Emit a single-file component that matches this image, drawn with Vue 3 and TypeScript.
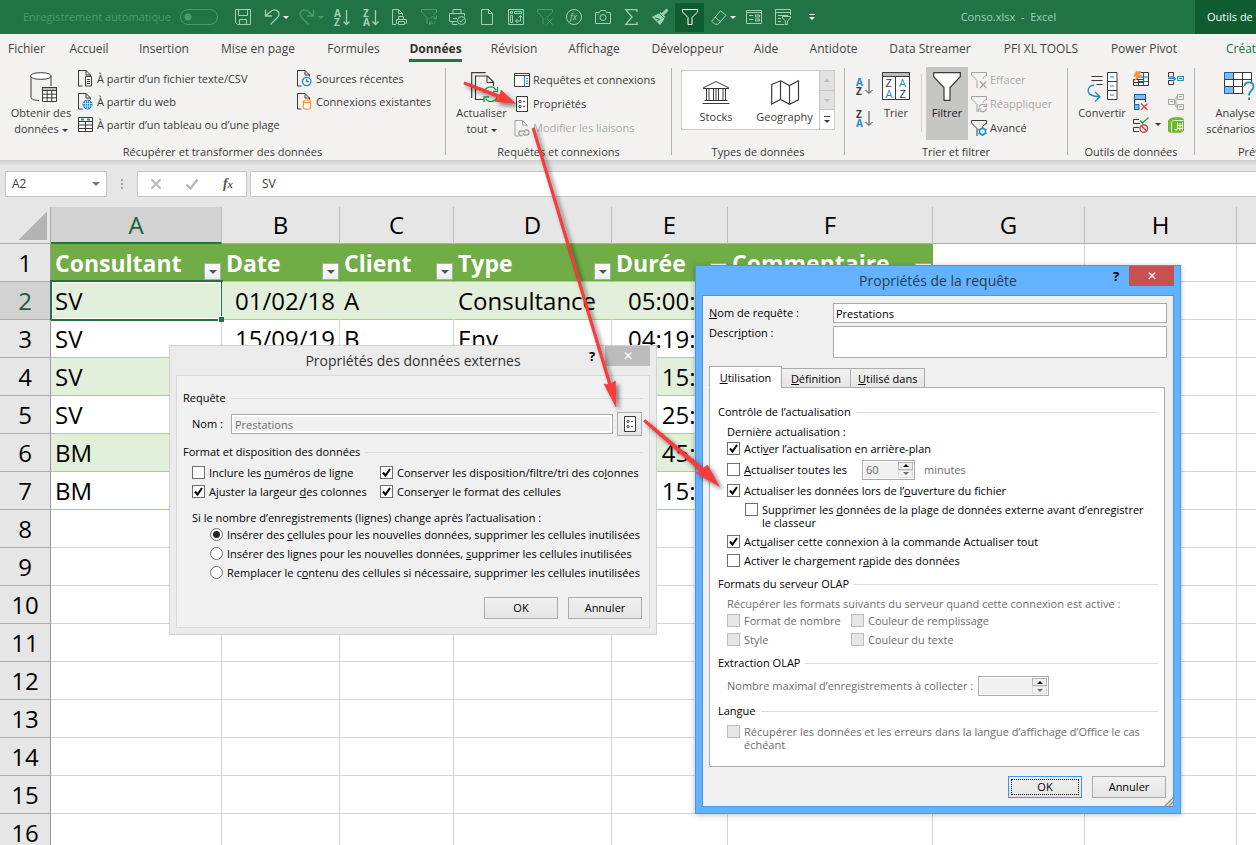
<script setup lang="ts">
import { h, ref } from 'vue'

interface Stroke { d: string; s?: string; f?: string; w?: number }
interface Letter { t: string; x: number; y: number; c?: string; size?: number; bold?: boolean; italic?: boolean }
interface IconDef { w: number; h: number; parts: (Stroke | Letter)[] }

const blue = '#1e8bcd'
const navy = '#0f64b4'
const orange = '#f79432'
const ink = '#3b3a39'
const red = '#e8414a'
const green = '#21a24f'
const gray = '#a3a3a3'

const docOutline = 'M4.5 16H.5V.5h7.500l4.500 4.500v1.500M8 .5V5h4.500'
const funnel = 'M.5.5h15v2.500L10 8.500v7H6v-7L.5 3z'
const brokenFunnel = 'M15.500 4V.5H.5V3L6 8.500V16M15.500 3l-4 3.500'

const icons: Record<string, IconDef> = {
  save: { w: 16, h: 16, parts: [{ d: 'M.5.5h15v15h-13l-2-2zM3.500.5v6h9v-6M4.500 15.500v-5h7v5' }] },
  undo: { w: 16, h: 16, parts: [{ d: 'M1.500.5v6.500h6.500M1.500 7L7 2.200C9.500.2 12.500.5 14 2.500c1.600 2.200 1 4.500-1 6.500L6.500 15.500', w: 1.3 }] },
  redo: { w: 16, h: 16, parts: [{ d: 'M14.500.5v6.500H8M14.500 7L9 2.200C6.500.2 3.500.5 2 2.500.4 4.700 1 7 3 9l6.500 6.500', w: 1.3 }] },
  sortAz: { w: 16, h: 17, parts: [{ t: 'A', x: 0, y: 8, size: 10, bold: true }, { t: 'Z', x: 0, y: 17, size: 10, bold: true }, { d: 'M12.500 1v14.500M9.500 12.500l3 3 3-3', w: 1.3 }] },
  sortZa: { w: 16, h: 17, parts: [{ t: 'Z', x: 0, y: 8, size: 10, bold: true }, { t: 'A', x: 0, y: 17, size: 10, bold: true }, { d: 'M12.500 1v14.500M9.500 12.500l3 3 3-3', w: 1.3 }] },
  docPrint: { w: 16, h: 16, parts: [{ d: 'M4 15.500H.5V.5h6l4 4v2M6.500.5v4h4M6.500 10.500v-3h5v3M5.500 14.500h-1v-4h10v4h-1M6.500 12.500h6v3h-6z' }] },
  filterSync: { w: 16, h: 16, parts: [{ d: 'M15.500 4V.5H.5V3L6 8.500V15M15.500 3l-3 3M8.500 10a4 4 0 0 1 6.500-1M15.500 6.500v3h-3M15 12.500a4 4 0 0 1-6 1.500M8.500 16v-3h3' }] },
  printCheck: { w: 17, h: 16, parts: [{ d: 'M4 4.500v-4h8v4M8 12.500H.5v-8h15v3M4 9.500h4M3.500 12.500v3h5' }, { d: 'M8.500 11.500a4 4 0 1 0 8 0a4 4 0 1 0-8 0M10.500 11.500l1.500 1.500 2.500-3' }] },
  page: { w: 12, h: 16, parts: [{ d: 'M.5.5h7l4 4v11H.5zM7.500.5v4h4' }] },
  pivot: { w: 16, h: 16, parts: [{ d: 'M.5.5h15v15H.5z' }, { d: 'M2.500 2.500h2v2h-2zM6.500 2.500h7v2h-7zM2.500 6.500h2v7h-2zM12.500 6.500v5.500H7.500M10.500 8.500l2-2 2 2M9.500 10l-2 2 2 2' }] },
  filterX: { w: 16, h: 16, parts: [{ d: 'M15.500 3V.5H.5V3L6 8.500V15M15.500 3L10 8.500M9.500 9.500l6 6M15.500 9.500l-6 6' }] },
  fxRound: { w: 16, h: 16, parts: [{ d: 'M.5 8a7.500 7.500 0 1 0 15 0a7.500 7.500 0 1 0-15 0' }, { t: 'fx', x: 4, y: 11, size: 9, italic: true }] },
  camera: { w: 16, h: 14, parts: [{ d: 'M.5 2.500h4l1-2h5l1 2h4v11H.5zM5 7.500a3 3 0 1 0 6 0a3 3 0 1 0-6 0M2.500 4.500h1' }] },
  sigma: { w: 13, h: 16, parts: [{ d: 'M12 3V.7H.8L7 8 .8 15.300H12V13', w: 1.3 }] },
  brush: { w: 17, h: 16, parts: [{ d: 'M15.500.5l-5 5', w: 3 }, { d: 'M8 3.500l5 5', w: 1.5 }, { d: 'M7 5l5 5-4 5.500L.5 8z', f: 'currentColor' }, { d: 'M3 9l4 1M5 12l3-2', s: '#217346' }] },
  filter: { w: 16, h: 16, parts: [{ d: funnel }] },
  eraser: { w: 16, h: 15, parts: [{ d: 'M9.500.8l5.500 4.500-8 9H4l-3.300-3zM4 7l5.500 4.800' }] },
  form: { w: 16, h: 14, parts: [{ d: 'M.5.5h15v13H.5zM.5 2.500h15M3 5.500h4M3 9.500h4M9.500 5h4v2h-4zM9.500 9h4v2h-4z' }] },
  formFilter: { w: 16, h: 16, parts: [{ d: 'M15.500 6V.5H.5v15h9M.5 3.500h15M3 6.500h10M3 9.500h3M3 12.500h3M7.500 7.500h8v1.500l-3 3v3.500h-2V12l-3-3z' }] },

  database: { w: 28, h: 31, parts: [
    { d: 'M1 4v21.500c0 1.800 4 3 8 3', s: ink }, { d: 'M.8 4c0-2 4-3.300 10-3.300S21 2 21 4s-4 3.300-10.200 3.300S.8 6 .8 4z', s: ink, f: '#fff' }, { d: 'M21 4v10', s: ink },
    { d: 'M12.500 15.500h14v14h-14z', s: ink, f: '#fff' }, { d: 'M12.500 15.500h14v3h-14z', s: ink, f: '#bbb' }, { d: 'M12.500 22.200h14M12.500 25.800h14M17.200 18.500v11M21.800 18.500v11', s: ink }] },
  docText: { w: 15, h: 17, parts: [{ d: docOutline, s: ink, f: 'none' }, { d: 'M7.500 6.500h6v9.500h-6z', s: ink, f: '#fff' }, { d: 'M9 9.500h3M9 11.500h3M9 13.500h3', s: ink }] },
  docWeb: { w: 15, h: 17, parts: [{ d: docOutline, s: ink, f: 'none' }, { d: 'M5 11.500a4.500 4.500 0 1 0 9 0a4.500 4.500 0 1 0-9 0', s: blue, f: blue }, { d: 'M5 10.500h9M5 13h9M9.500 7v9M7.500 8v7M11.500 8v7', s: '#d9effb', w: 0.7 }] },
  tableIcon: { w: 15, h: 15, parts: [{ d: 'M.5.5h14v14H.5z', s: ink, f: '#fff' }, { d: 'M.5 4.500h14M.5 8h14M.5 11.500h14M7.500 4.500v10', s: ink }, { d: 'M3 2.500h3M9 2.500h3', s: blue, w: 2 }] },
  docClock: { w: 15, h: 17, parts: [{ d: docOutline, s: ink, f: 'none' }, { d: 'M5.500 11.500a4.200 4.200 0 1 0 8.400 0a4.200 4.200 0 1 0-8.400 0', s: blue, f: '#fff', w: 1.3 }, { d: 'M9.700 9v2.700H12', s: ink }] },
  docDb: { w: 15, h: 17, parts: [{ d: docOutline, s: ink, f: 'none' }, { d: 'M6.500 8.500c0-2 7-2 7 0v6.500c0 1.500-7 1.500-7 0zM6.500 8.500c0 1.600 7 1.600 7 0', s: orange, f: '#fff', w: 1.2 }] },
  refreshAll: { w: 28, h: 30, parts: [
    { d: 'M.7 26V.7h14', s: ink, w: 1.2 }, { d: 'M13 27.500H4.500V4h12l6 6v4', s: ink, f: 'none', w: 1.2 }, { d: 'M16 4v6.500h6.500', s: ink },
    { d: 'M13 21a6.500 6.500 0 0 1 12-3M26.500 15v4.500H22M26.500 23a6.500 6.500 0 0 1-12 3.500M13 30v-5h5', s: green, w: 1.4 }] },
  panes: { w: 16, h: 14, parts: [{ d: 'M.5.5h15v13H.5z', s: ink, f: '#fff' }, { d: 'M.5 2.500h15', s: ink }, { d: 'M10.500 3v10', s: blue }, { d: 'M12 5.500h2M12 8h2M12 10.500h2', s: blue }] },
  props: { w: 12, h: 16, parts: [{ d: 'M.5.5h11v15H.5z', s: ink, f: '#fff' }, { d: 'M3 4.500h2v2H3zM3 9.500h2v2H3zM7 5.500h2M7 10.500h2', s: '#555' }] },
  links: { w: 15, h: 17, parts: [{ d: docOutline, s: gray, f: 'none' }, { d: 'M8 15.500H6.500a2 2 0 0 1 0-4.500h2.500a2 2 0 0 1 1.500 2.500M10 10h2a2 2 0 0 1 0 5h-2a2 2 0 0 1-1.500-2', s: gray, w: 1.3 }] },
  bank: { w: 28, h: 25, parts: [{ d: 'M1 8L14 1.500 27 8M1 8.500h26M2.500 20.500h23M.5 23.500h27M4.500 8.500v12M7 8.500v12M11.500 8.500v12M14 8.500v12M16.500 8.500v12M21 8.500v12M23.500 8.500v12', s: ink }] },
  map: { w: 28, h: 25, parts: [{ d: 'M.7 4.500L9.500.8l9 4.700 9-4.700v19l-9 4.500-9-4.800L.7 24zM9.500.8v18.700M18.500 5.500v18.800', s: ink, f: 'none', w: 1.2 }] },
  azBlue: { w: 17, h: 17, parts: [{ t: 'A', x: 0, y: 8, c: blue, size: 10, bold: true }, { t: 'Z', x: 0, y: 17, c: ink, size: 10, bold: true }, { d: 'M13 1v14M9.500 12l3.500 3.500 3.500-3.500', s: ink }] },
  zaBlue: { w: 17, h: 17, parts: [{ t: 'Z', x: 0, y: 8, c: ink, size: 10, bold: true }, { t: 'A', x: 0, y: 17, c: blue, size: 10, bold: true }, { d: 'M13 1v14M9.500 12l3.500 3.500 3.500-3.500', s: ink }] },
  sortBig: { w: 28, h: 28, parts: [{ d: 'M.5.5h27v27H.5z', s: ink, f: '#fff' }, { d: 'M.5.5h27v4H.5z', s: ink, f: '#bbb' }, { d: 'M13.500 4.500v23', s: ink },
    { t: 'Z', x: 3.500, y: 15, c: ink, size: 11 }, { t: 'A', x: 17, y: 15, c: blue, size: 11 }, { t: 'A', x: 3.500, y: 25.500, c: blue, size: 11 }, { t: 'Z', x: 17.500, y: 25.500, c: ink, size: 11 }] },
  filterBig: { w: 28, h: 29, parts: [{ d: 'M.7.7h26.600v4L17 15.500v12.800h-6V15.500L.7 4.700z', s: ink, f: '#fff', w: 1.2 }] },
  clearFilter: { w: 16, h: 16, parts: [{ d: brokenFunnel, s: gray }, { d: 'M9 9.500l6.500 6.500M15.500 9.500L9 16', s: gray, w: 1.3 }] },
  reapply: { w: 16, h: 16, parts: [{ d: brokenFunnel, s: gray }, { d: 'M8 11.500a3.800 3.800 0 0 1 6.500-2M15.500 7.500v3h-3M15.500 12.500a3.800 3.800 0 0 1-6.500 2M7.500 16v-3h3', s: gray, w: 1.2 }] },
  advanced: { w: 16, h: 16, parts: [{ d: brokenFunnel, s: ink, f: 'none' }, { d: 'M11.500 7v9M7.500 9.300l8 4.500M15.500 9.300l-8 4.500', s: blue, w: 1.8 }, { d: 'M8.500 11.500a3 3 0 1 0 6 0a3 3 0 1 0-6 0', s: blue, f: '#fff', w: 1.4 }] },
  convert: { w: 31, h: 30, parts: [{ d: 'M4.500 4.500h11M4.500 8.500h11M9.500 12.500h6', s: ink, w: 1.2 }, { d: 'M7 13c-4.500.5-6.500 3.500-5.800 6.500.7 3 3.500 5 11.500 5M8 20l5 4.800-5 4.700', s: blue, w: 1.3 }, { d: 'M20.500.5h9.500v27h-9.500zM20.500 9.500H30M20.500 18.500H30', s: ink, f: '#fff' }, { d: 'M23 5h4M23 14h4M23 23h4', s: blue, w: 1.2 }] },
  flashFill: { w: 16, h: 16, parts: [{ d: 'M4.500 1.500h11v13h-11z', s: ink, f: '#fff' }, { d: 'M.5 8.500h10v6H.5zM.5 11.500h10M5.500 8.500v6', s: ink, f: '#fff' }, { d: 'M10.500 1.500v13M5 6h10.500M5 10.500h10.500', s: navy, w: 1.2 }, { d: 'M3 .5h5L6 4h3L1.500 10 3.500 5.500h-3z', s: orange, f: orange, w: 0.5 }] },
  dedupe: { w: 16, h: 16, parts: [{ d: 'M1.500.5h11v5h-11z', s: navy, f: '#83b9e8' }, { d: 'M1.500 5.500h11V8M1.500 5.500v10', s: ink }, { d: 'M1.500 10.500H6v5H1.500z', s: navy, f: '#83b9e8' }, { d: 'M8 9.500l6.500 6.500M14.500 9.500L8 16', s: red, w: 1.4 }] },
  validate: { w: 16, h: 16, parts: [{ d: 'M6 2.500H.5v4H7M6 10.500H.5v4H6', s: ink, f: 'none' }, { d: 'M7 3.500l2.500 2.500L15.500.5', s: green, w: 1.3 }, { d: 'M7 11.500a3.800 3.800 0 1 0 7.600 0a3.800 3.800 0 1 0-7.600 0M8.500 9l5 5', s: red, w: 1.4 }] },
  consolidate: { w: 16, h: 14, parts: [{ d: 'M5.500 4.500V.5h-5v4.500h5M5.500 9.500v3h-5v-4h5', s: ink, f: 'none' }, { d: 'M0 6.500h7.500M5 4.500l2.500 2.200L5 9', s: blue, w: 1.2 }, { d: 'M9.500 4.500h6v4h-6zM11 6.500h3', s: blue }] },
  relations: { w: 16, h: 16, parts: [{ d: 'M.5 5.500h6v5h-6zM9.500.5h6v5h-6zM9.500 10.500h6v5h-6zM6.500 8h1.500V3h1.500M8 8v5h1.500M2 7.500h3M11 2.500h3M11 12.500h3', s: gray }] },
  dataModel: { w: 16, h: 16, parts: [{ d: 'M0 3.500C2 1 4 .2 6 .2h6c2 0 3.500 1 4 2.500v11l-3 2H4c-2 0-3-.5-4-1.500z', s: 'none', f: '#6fb92c' }, { d: 'M3.500 15V5.500C4 3.800 5 3.500 6.500 3.500h9', s: '#e4f3d3' }, { d: 'M9.500 5.500v6.500c0 1.500-2.500 1.500-3 0M12 6v7.500M14.500 5.500v8M9.500 8.500h5M10 11.500h4.500', s: '#fff' }] },
  whatIf: { w: 31, h: 29, parts: [{ d: 'M.5.500h27v21H.5z', s: ink, f: '#fff' }, { d: 'M.5.500h9v7H.5zM.5 14.500h9v7H.5z', s: navy, f: '#83b9e8' }, { d: 'M.5 7.500h27M.5 14.500h27M9.500.5v21M18.500.5v21', s: ink }, { d: 'M19.500 10.500h11.500v18h-11.500z', s: 'none', f: '#f3f2f1' }, { d: 'M20.500 14c.4-5 9-5 9 .5 0 4-4.500 4-4.500 9M25 25.500v2.500', s: blue, w: 1.7 }] },
  cross: { w: 12, h: 12, parts: [{ d: 'M1.500 1.500l9 9M10.500 1.500l-9 9', s: '#b9b9b9', w: 2 }] },
  tick: { w: 14, h: 12, parts: [{ d: 'M1.500 6.500l4 4L12.500 1.500', s: '#b9b9b9', w: 2.4 }] }
}

const Icon = (props: { name: string }) => {
  const def = icons[props.name]
  return h(
    'svg',
    { width: def.w, height: def.h, viewBox: `0 0 ${def.w} ${def.h}`, class: 'icon', 'aria-hidden': 'true' },
    def.parts.map(p =>
      't' in p
        ? h('text', {
            x: p.x, y: p.y, fill: p.c ?? 'currentColor', 'font-size': p.size ?? 9,
            'font-weight': p.bold ? 700 : 400, 'font-style': p.italic ? 'italic' : 'normal'
          }, p.t)
        : h('path', { d: p.d, stroke: p.s ?? 'currentColor', fill: p.f ?? 'none', 'stroke-width': p.w ?? 1 })
    )
  )
}
Icon.props = ['name']

const quickTools = [
  { icon: 'save', label: 'Enregistrer' },
  { icon: 'undo', label: 'Annuler la frappe', menu: true },
  { icon: 'redo', label: 'Rétablir', menu: true, off: true },
  { icon: 'sortAz', label: 'Trier de A à Z' },
  { icon: 'sortZa', label: 'Trier de Z à A' },
  { icon: 'docPrint', label: 'Aperçu' },
  { icon: 'filterSync', label: 'Réappliquer', off: true },
  { icon: 'printCheck', label: 'Impression rapide' },
  { icon: 'page', label: 'Nouveau' },
  { icon: 'pivot', label: 'Tableau croisé' },
  { icon: 'filterX', label: 'Effacer', off: true },
  { icon: 'fxRound', label: 'Fonction' },
  { icon: 'camera', label: 'Appareil photo' },
  { icon: 'sigma', label: 'Somme' },
  { icon: 'brush', label: 'Reproduire' },
  { icon: 'filter', label: 'Filtrer', active: true },
  { icon: 'eraser', label: 'Gomme', menu: true },
  { icon: 'form', label: 'Formulaire' },
  { icon: 'formFilter', label: 'Filtre avancé' }
]

const tabs = [
  { name: 'Fichier', w: 53 }, { name: 'Accueil', w: 72 }, { name: 'Insertion', w: 78 }, { name: 'Mise en page', w: 110 },
  { name: 'Formules', w: 81 }, { name: 'Données', w: 83 }, { name: 'Révision', w: 74 }, { name: 'Affichage', w: 86 },
  { name: 'Développeur', w: 101 }, { name: 'Aide', w: 56 }, { name: 'Antidote', w: 79 }, { name: 'Data Streamer', w: 114 },
  { name: 'PFI XL TOOLS', w: 108 }, { name: 'Power Pivot', w: 98 }
]

const columns = [
  { id: 'A', w: 171 }, { id: 'B', w: 118 }, { id: 'C', w: 114 }, { id: 'D', w: 158 }, { id: 'E', w: 116 },
  { id: 'F', w: 205 }, { id: 'G', w: 152 }, { id: 'H', w: 152 }, { id: 'I', w: 152 }
]
const rows: string[][] = [
  ['Consultant', 'Date', 'Client', 'Type', 'Durée', 'Commentaire'],
  ['SV', '01/02/18', 'A', 'Consultance', '05:00:00', ''],
  ['SV', '15/09/19', 'B', 'Env', '04:19:00', ''],
  ['SV', '', '', '', '15:00', ''],
  ['SV', '', '', '', '25:00', ''],
  ['BM', '', '', '', '45:00', ''],
  ['BM', '', '', '', '15:00', '']
]
const cell = (r: number, c: number) => rows[r - 1]?.[c] ?? ''

const queryName = ref('Prestations')
const insertMode = ref('cells')
</script>

<template>
  <div class="app">
    <header class="titlebar">
      <label class="autosave"><span>Enregistrement automatique</span><input type="checkbox" role="switch" disabled /></label>
      <div class="quick">
        <button v-for="t in quickTools" :key="t.icon" :class="{ split: t.menu, off: t.off, active: t.active }" :aria-label="t.label">
          <Icon :name="t.icon" /><i v-if="t.menu" class="caret"></i>
        </button>
        <button class="customise" aria-label="Personnaliser"><i class="bar"></i><i class="caret"></i></button>
      </div>
      <div class="doc-title">Conso.xlsx&nbsp; -&nbsp; Excel</div>
      <div class="context">Outils de tableau</div>
    </header>

    <nav class="tabs">
      <button v-for="t in tabs" :key="t.name" :style="{ width: t.w + 'px' }" :class="{ current: t.name === 'Données' }"><span>{{ t.name }}</span></button>
      <button class="contextual"><span>Création</span></button>
    </nav>

    <section class="ribbon">
      <div class="group get">
        <div class="body">
          <button class="big"><Icon name="database" /><span>Obtenir des<br />données<i class="caret"></i></span></button>
          <div class="list tight">
            <button><Icon name="docText" />À partir d’un fichier texte/CSV</button>
            <button><Icon name="docWeb" />À partir du web</button>
            <button><Icon name="tableIcon" />À partir d’un tableau ou d’une plage</button>
          </div>
          <div class="list tight">
            <button><Icon name="docClock" />Sources récentes</button>
            <button><Icon name="docDb" />Connexions existantes</button>
          </div>
        </div>
        <h2>Récupérer et transformer des données</h2>
      </div>
      <div class="group queries">
        <div class="body">
          <button class="big"><Icon name="refreshAll" /><span>Actualiser<br />tout<i class="caret"></i></span></button>
          <div class="list">
            <button><Icon name="panes" />Requêtes et connexions</button>
            <button><Icon name="props" />Propriétés</button>
            <button disabled><Icon name="links" />Modifier les liaisons</button>
          </div>
        </div>
        <h2>Requêtes et connexions</h2>
      </div>
      <div class="group types">
        <div class="body">
          <div class="gallery">
            <button><Icon name="bank" />Stocks</button>
            <button><Icon name="map" />Geography</button>
            <div class="scroll">
              <button disabled aria-label="Monter"><i class="caret up"></i></button>
              <button disabled aria-label="Descendre"><i class="caret"></i></button>
              <button aria-label="Plus"><i class="bar"></i><i class="caret"></i></button>
            </div>
          </div>
        </div>
        <h2>Types de données</h2>
      </div>
      <div class="group sorting">
        <div class="body">
          <div class="sorts">
            <button aria-label="Croissant"><Icon name="azBlue" /></button>
            <button aria-label="Décroissant"><Icon name="zaBlue" /></button>
          </div>
          <button class="big sort"><Icon name="sortBig" /><span>Trier</span></button>
          <button class="big pressed"><Icon name="filterBig" /><span>Filtrer</span></button>
          <div class="list">
            <button disabled><Icon name="clearFilter" />Effacer</button>
            <button disabled><Icon name="reapply" />Réappliquer</button>
            <button><Icon name="advanced" />Avancé</button>
          </div>
        </div>
        <h2>Trier et filtrer</h2>
      </div>
      <div class="group tools">
        <div class="body">
          <button class="big"><Icon name="convert" /><span>Convertir</span></button>
          <div class="list tight first">
            <button aria-label="Remplissage instantané"><Icon name="flashFill" /></button>
            <button aria-label="Supprimer les doublons"><Icon name="dedupe" /></button>
            <button aria-label="Validation"><Icon name="validate" /><i class="caret"></i></button>
          </div>
          <div class="list tight">
            <button aria-label="Consolider"><Icon name="consolidate" /></button>
            <button aria-label="Relations"><Icon name="relations" /></button>
            <button aria-label="Modèle de données"><Icon name="dataModel" /></button>
          </div>
        </div>
        <h2>Outils de données</h2>
      </div>
      <div class="group forecast">
        <div class="body">
          <button class="big"><Icon name="whatIf" /><span>Analyse<br />scénarios</span></button>
        </div>
        <h2>Prévision</h2>
      </div>
    </section>

    <div class="formula-bar">
      <button class="namebox">A2<i class="caret"></i></button>
      <div class="dots"><i></i><i></i><i></i></div>
      <div class="entry">
        <button aria-label="Annuler la saisie"><Icon name="cross" /></button>
        <button aria-label="Valider"><Icon name="tick" /></button>
        <button aria-label="Insérer une fonction" class="fx">f<sub>x</sub></button>
      </div>
      <input value="SV" aria-label="Barre de formule" />
    </div>

    <main class="sheet">
      <table>
        <colgroup>
          <col class="gutter" />
          <col v-for="c in columns" :key="c.id" :style="{ width: c.w + 'px' }" />
        </colgroup>
        <thead>
          <tr>
            <th class="corner"></th>
            <th v-for="c in columns" :key="c.id" :class="{ chosen: c.id === 'A' }">{{ c.id }}</th>
          </tr>
        </thead>
        <tbody>
          <tr v-for="r in 16" :key="r" :class="{ heads: r === 1, band: r < 8 && r % 2 === 0, listed: r < 8 }">
            <th :class="{ chosen: r === 2 }">{{ r }}</th>
            <td v-for="(c, i) in columns" :key="c.id" :class="['col-' + c.id, { tbl: i < 6 && r < 8, picked: r === 2 && i === 0 }]">
              {{ cell(r, i) }}
              <button v-if="r === 1 && i < 6" class="drop" :aria-label="'Filtrer ' + cell(r, i)"><i class="caret"></i></button>
            </td>
          </tr>
        </tbody>
      </table>
    </main>

    <section class="dialog external" role="dialog" aria-labelledby="ext-title">
      <div class="dlg-title"><h3 id="ext-title">Propriétés des données externes</h3><button class="help">?</button><button class="close" aria-label="Fermer">✕</button></div>
      <form class="dlg-body" @submit.prevent>
        <h4>Requête</h4>
        <div class="name-row">
          <label for="ext-name">Nom :</label>
          <input id="ext-name" class="text" :value="queryName" disabled />
          <button class="props-btn" aria-label="Propriétés de la connexion"><Icon name="props" /></button>
        </div>
        <h4 class="second">Format et disposition des données</h4>
        <div class="two">
          <label><input type="checkbox" /><span>Inclure les <u>n</u>uméros de ligne</span></label>
          <label><input type="checkbox" checked /><span>Conserver les disposition/filtre/tri des co<u>l</u>onnes</span></label>
          <label><input type="checkbox" checked /><span>Ajuster la largeur <u>d</u>es colonnes</span></label>
          <label><input type="checkbox" checked /><span>Conser<u>v</u>er le format des cellules</span></label>
        </div>
        <p>Si le nombre d’enregistrements (lignes) change après l’actualisation :</p>
        <div class="radios">
          <label><input v-model="insertMode" type="radio" value="cells" /><span>Insérer des <u>c</u>ellules pour les nouvelles données, supprimer les cellules inutilisées</span></label>
          <label><input v-model="insertMode" type="radio" value="rows" /><span>Insérer des lignes pour les nouvelles données, <u>s</u>upprimer les cellules inutilisées</span></label>
          <label><input v-model="insertMode" type="radio" value="replace" /><span>Remplacer le c<u>o</u>ntenu des cellules si nécessaire, supprimer les cellules inutilisées</span></label>
        </div>
        <div class="actions"><button class="push">OK</button><button class="push">Annuler</button></div>
      </form>
    </section>

    <section class="dialog query" role="dialog" aria-labelledby="qry-title">
      <div class="dlg-title"><h3 id="qry-title">Propriétés de la requête</h3><button class="help">?</button><button class="close" aria-label="Fermer">✕</button></div>
      <form class="dlg-body" @submit.prevent>
        <div class="fields">
          <label for="q-name"><u>N</u>om de requête :</label>
          <input id="q-name" v-model="queryName" class="text" />
          <label for="q-desc">Descr<u>i</u>ption :</label>
          <textarea id="q-desc" class="text"></textarea>
        </div>
        <div class="dlg-tabs" role="tablist">
          <button role="tab" class="on" aria-selected="true"><u>U</u>tilisation</button>
          <button role="tab"><u>D</u>éfinition</button>
          <button role="tab"><u>U</u>tilisé dans</button>
        </div>
        <div class="pane" role="tabpanel">
          <h4>Contrôle de l’actualisation</h4>
          <p>Dernière actualisation :</p>
          <label class="opt"><input type="checkbox" checked /><span>Acti<u>v</u>er l’actualisation en arrière-plan</span></label>
          <div class="opt every">
            <label><input type="checkbox" /><span><u>A</u>ctualiser toutes les</span></label>
            <div class="spin"><input value="60" disabled aria-label="Intervalle" /><span class="steps"><button aria-label="Plus"><i class="caret up"></i></button><button disabled aria-label="Moins"><i class="caret"></i></button></span></div>
            <span class="dim">minutes</span>
          </div>
          <label class="opt"><input type="checkbox" checked /><span>Actualiser les données lors de l’<u>o</u>uverture du fichier</span></label>
          <label class="opt nested"><input type="checkbox" /><span>Supprimer les <u>d</u>onnées de la plage de données externe avant d’enregistrer<br />le classeur</span></label>
          <label class="opt"><input type="checkbox" checked /><span>Act<u>u</u>aliser cette connexion à la commande Actualiser tout</span></label>
          <label class="opt"><input type="checkbox" /><span>Activer le chargement r<u>a</u>pide des données</span></label>
          <h4 class="olap">Formats du serveur OLAP</h4>
          <p class="dim">Récupérer les formats suivants du serveur quand cette connexion est active :</p>
          <div class="formats dim">
            <label><input type="checkbox" disabled /><span>Format de nombre</span></label>
            <label><input type="checkbox" disabled /><span>Couleur de remplissage</span></label>
            <label><input type="checkbox" disabled /><span>Style</span></label>
            <label><input type="checkbox" disabled /><span>Couleur du texte</span></label>
          </div>
          <h4 class="extract">Extraction OLAP</h4>
          <div class="max dim">
            <label for="q-max">Nombre maximal d’enregistrements à collecter :</label>
            <div class="spin wide"><input id="q-max" disabled /><span class="steps"><button aria-label="Plus"><i class="caret up"></i></button><button disabled aria-label="Moins"><i class="caret"></i></button></span></div>
          </div>
          <h4 class="lang">Langue</h4>
          <label class="opt multi dim"><input type="checkbox" disabled /><span>Récupérer les données et les erreurs dans la langue d’affichage d’Office le cas<br />échéant</span></label>
        </div>
        <div class="actions"><button class="push default">OK</button><button class="push">Annuler</button></div>
      </form>
      <svg class="grip" width="11" height="11" viewBox="0 0 11 11"><path d="M1 11L11 1M5 11l6-6M9 11l2-2" stroke="#8d8d8d" stroke-width="1.300" /></svg>
    </section>

    <svg class="arrows" aria-hidden="true">
      <defs>
        <filter id="cast" x="-20%" y="-20%" width="150%" height="150%"><feDropShadow dx="3" dy="3" stdDeviation="2" flood-color="#000" flood-opacity="0.500" /></filter>
      </defs>
      <g filter="url(#cast)" fill="#fb3b3b" stroke="#e03030" stroke-width="0.500" stroke-linejoin="round">
        <path d="M464.500 81.800L500 95L501 90L515.500 103.500L495 101.500L498.500 98L463.800 84.200z" />
        <path d="M532 128.500L608.500 384.500L604 384L616 407L615.500 381L611 383.500L534.500 127.800z" />
        <path d="M643.500 421.500L700 471L696 473L719.500 486.500L707.500 465L703.500 468L645.200 419.500z" />
      </g>
    </svg>
  </div>
</template>

<style>
body { margin: 0; overflow: hidden; }
</style>

<style scoped>
.app {
  position: relative;
  display: flex;
  flex-direction: column;
  height: 100vh;
  overflow: hidden;
  background: #e6e6e6;
  color: #3b3a39;
  font: 11px/16px "Open Sans", "Noto Sans", sans-serif;
}
button, input, textarea { font: inherit; color: inherit; margin: 0; box-sizing: border-box; border-radius: 0; }
button { padding: 0; border: 0; background: none; white-space: nowrap; }
h2, h3, h4, p { margin: 0; font: inherit; }
.icon { display: block; flex: none; overflow: visible; }
.caret { display: inline-block; flex: none; border: 3px solid transparent; border-top-color: currentColor; border-bottom: 0; }
.caret.up { border-top: 0; border-bottom: 3px solid currentColor; }
.bar { display: block; width: 6px; height: 1px; background: currentColor; }

/* title bar */
.titlebar { display: flex; flex: none; height: 34px; align-items: center; background: #217346; color: #9fd0b3; }
.autosave { display: flex; align-items: center; gap: 9px; width: 205px; padding-left: 23px; color: #4d9a6d; white-space: nowrap; }
.autosave input { appearance: none; width: 38px; height: 16px; border: 1px solid #4d9a6d; border-radius: 8px; background: radial-gradient(circle at 7px 7px, #4d9a6d 3px, transparent 4px); }
.quick { display: flex; height: 100%; align-items: center; flex: none; }
.quick button { display: flex; align-items: center; justify-content: center; width: 29px; height: 29px; }
.quick .split { width: 35px; gap: 3px; padding-left: 3px; }
.quick .split .caret { color: #fff; }
.quick .off, .quick .off.split .caret { color: #4d9a6d; }
.quick .active { background: #0e5c2f; color: #fff; }
.quick .customise { flex-direction: column; gap: 2px; color: #fff; }
.doc-title { flex: 1; padding-right: 4px; text-align: center; }
.context { display: flex; align-items: center; flex: none; box-sizing: border-box; width: 61px; height: 100%; padding-left: 12px; overflow: hidden; background: #0e5c2f; color: #fff; white-space: nowrap; }

/* tabs */
.tabs { display: flex; flex: none; align-items: flex-start; height: 33px; overflow: hidden; background: #f3f2f1; font-size: 12px; color: #444; }
.tabs button { flex: none; text-align: center; padding-top: 5px; }
.tabs button span { display: inline-block; line-height: 20px; border-bottom: 3px solid transparent; }
.tabs .current { font-weight: 700; color: #333; }
.tabs .current span { border-color: #217346; }
.tabs .contextual { margin-left: 33px; color: #217346; }

/* ribbon */
.ribbon { display: flex; flex: none; height: 93px; background: #f3f2f1; overflow: hidden; }
.group { display: flex; flex-direction: column; flex: none; box-sizing: border-box; margin: 1px 0 5px; border-right: 1px solid #b5b3b1; }
.group .body { display: flex; flex: 1; align-items: flex-start; min-height: 0; }
.group h2 { text-align: center; line-height: 14px; margin-bottom: -4px; }
.get { width: 446px; }
.queries { width: 226px; }
.types { width: 173px; }
.sorting { width: 223px; }
.tools { width: 127px; }
.forecast { width: 100px; border: 0; }
.big { display: flex; flex-direction: column; align-items: center; width: 74px; height: 72px; padding-top: 4px; box-sizing: border-box; }
.big .icon { margin-bottom: auto; }
.big span { height: 36px; line-height: 16px; display: block; padding-top: 1px; box-sizing: border-box; }
.big .caret { vertical-align: middle; margin-left: 3px; }
.list { display: flex; flex-direction: column; }
.list button { display: flex; align-items: center; gap: 4px; height: 24px; }
.list button:disabled { color: #aaa; }
.list.tight { margin-top: -1px; }
.list.tight button { height: 23px; }
.get .big { margin-left: 4px; }
.get .big .icon, .queries .big .icon { margin-left: 6px; }
.get .list:nth-child(2) { width: 219px; }
.get .list .icon { min-width: 15px; }
.queries .big { width: 65px; margin-left: 3px; }
.queries .list { width: 150px; }
.queries .list button { gap: 3px; }
.queries .list .icon { min-width: 16px; }
.gallery { display: grid; grid-template-columns: 68px 69px 15px; margin: 2px 0 0 9px; height: 60px; box-sizing: border-box; border: 1px solid #cfcdcb; background: #fff; }
.gallery > button { display: flex; flex-direction: column; align-items: center; justify-content: flex-end; gap: 4px; padding-bottom: 4px; }
.scroll { display: grid; grid-template-rows: 20px 19px 19px; }
.scroll button { display: flex; flex-direction: column; gap: 3px; align-items: center; justify-content: center; border-left: 1px solid #c8c6c4; }
.scroll button:disabled { background: #e1e1e1; color: #b9b9b9; border-bottom: 1px solid #c8c6c4; }
.sorts { display: flex; flex-direction: column; gap: 15px; padding: 10px 0 0 11px; width: 22px; }
.big.sort { width: 38px; margin-left: -1px; }
.sorting .pressed { position: relative; width: 42px; height: 73px; margin: -1px 3px 0 11px; padding-top: 5px; background: #c6c6c5; color: #222; }
.sorting .pressed::before { content: ""; position: absolute; left: -5px; top: 7px; height: 58px; border-left: 1px solid #d2d0ce; }
.sorting .list button { gap: 3px; }
.tools .big { width: 66px; margin-left: 1px; }
.tools .first { width: 35px; margin-left: -2px; }
.tools .list button { gap: 6px; }
.forecast .big { width: 60px; align-items: flex-end; text-align: right; }
.forecast h2 { text-align: left; padding-left: 43px; }

/* formula bar */
.formula-bar { display: flex; flex: none; height: 47px; box-sizing: border-box; padding: 11px 0 10px 5px; background: linear-gradient(#cfcfcf, #e6e6e6 6px); font-size: 12px; }
.namebox, .entry, .formula-bar > input { border: 1px solid #c6c6c6; background: #fff; box-sizing: border-box; }
.namebox { display: flex; justify-content: space-between; align-items: center; width: 102px; padding: 0 6px; }
.namebox .caret { border-width: 4px 4px 0; color: #777; }
.dots { display: flex; flex-direction: column; gap: 2px; align-items: center; justify-content: center; width: 30px; }
.dots i { width: 2px; height: 2px; background: #a5a5a5; }
.entry { display: flex; width: 110px; margin-right: 3px; }
.entry button { display: flex; flex: 1; align-items: center; justify-content: center; }
.entry .fx { font: italic 700 14px/16px "Liberation Serif", serif; color: #555; }
.entry .fx sub { font-size: 11px; line-height: 8px; }
.formula-bar > input { flex: 1; min-width: 0; padding: 0 11px; border-right: 0; }

/* worksheet */
.sheet { flex: 1; min-height: 0; overflow: hidden; background: #fff; }
table { width: 1389px; table-layout: fixed; border-collapse: separate; border-spacing: 0; font-size: 24px; line-height: 32px; color: #000; }
.gutter { width: 51px; }
th, td { box-sizing: border-box; height: 38px; padding: 0 4px; border: solid #d4d4d4; border-width: 0 1px 1px 0; text-align: left; white-space: nowrap; position: relative; }
th { font-weight: 400; text-align: center; background: #e6e6e6; border-color: #ababab; padding: 0; }
thead th { height: 37px; }
thead th:not(:first-child) { border-right-color: #bdbdbd; }
tbody th { border-right-color: #999; }
th.chosen { background: #d2d2d2; color: #1b5e3a; }
thead th.chosen { border-bottom: 2px solid #217346; }
.corner::after { content: ""; position: absolute; right: 3px; bottom: 3px; width: 28px; height: 28px; background: linear-gradient(135deg, transparent 50%, #b3b3b3 50%); }
.heads .tbl { background: #70ad47; color: #fff; font-weight: 700; font-size: 23px; border-color: #70ad47; border-bottom-color: #a9d08e; }
.band .tbl { background: #e2efda; border-right-color: #e2efda; }
.listed .tbl { border-bottom-color: #a9d08e; }
.listed:not(.heads) .col-B, .listed:not(.heads) .col-E { text-align: right; }
.drop { position: absolute; right: 0; bottom: 1px; display: flex; align-items: center; justify-content: center; width: 17px; height: 17px; border: 1px solid #ababab; background: linear-gradient(#fff, #e9edf3); color: #555; }
.drop .caret { border-width: 4px 4px 0; }
.picked::before { content: ""; position: absolute; left: -1px; top: -2px; right: -2px; bottom: -2px; border: 2px solid #217346; box-shadow: inset 0 0 0 1px #fff; }
.picked::after { content: ""; position: absolute; right: -3px; bottom: -3px; width: 5px; height: 5px; border: solid #fff; border-width: 1px 0 0 1px; background: #217346; z-index: 1; }

/* dialogs */
.dialog { position: absolute; box-sizing: border-box; color: #000; }
.external { left: 169px; top: 345px; width: 488px; padding: 0 6px 6px; border: 1px solid #d0d0d0; background: #ebebeb; }
.query { left: 695px; top: 265px; width: 486px; padding: 0 6px 6px; border: 1px solid #4c96dc; background: #63b2fd; box-shadow: 0 1px 6px rgba(0, 0, 0, .25); }
.dlg-title { position: relative; height: 29px; }
.dlg-title h3 { font-size: 14px; line-height: 29px; text-align: center; color: #2b3b4d; }
.external .dlg-title h3 { color: #333; }
.help { position: absolute; right: 51px; top: 0; width: 14px; height: 20px; font-weight: 700; font-size: 13px; }
.close { position: absolute; right: 0; top: 0; width: 45px; height: 20px; background: #c75050; color: #fff; font-size: 12px; }
.external .close { background: #bcbcbc; }
.dlg-body { display: flex; flex-direction: column; border: 1px solid #d9d9d9; background: #f0f0f0; padding: 0 6px; }
.query .dlg-body { border-color: #4c96dc; padding: 7px 6px 8px; }
.external .dlg-body { padding: 14px 6px 8px; }
h4 { display: flex; align-items: center; gap: 5px; height: 16px; white-space: nowrap; }
h4::after { content: ""; flex: 1; border-top: 1px solid #dadada; }
label { display: flex; align-items: center; gap: 4px; white-space: nowrap; }
u { text-decoration: underline; text-underline-offset: 1px; text-decoration-skip-ink: none; }
input[type="checkbox"]:not([role]), input[type="radio"] { appearance: none; flex: none; width: 13px; height: 13px; border: 1px solid #6e6e6e; background: #fff center no-repeat; }
input[type="radio"] { border-radius: 50%; }
input[type="radio"]:checked { background: radial-gradient(circle, #222 3px, #fff 4px); }
input[type="checkbox"]:checked { background-image: url("data:image/svg+xml,%3Csvg xmlns='http://www.w3.org/2000/svg' width='11' height='11'%3E%3Cpath d='M2 5.500l2.500 3L9 2' fill='none' stroke='%23000' stroke-width='2'/%3E%3C/svg%3E"); }
input[type="checkbox"]:disabled:not([role]) { border-color: #bcbcbc; background: #e6e6e6; }
.text { border: 1px solid #ababab; background: #fff; padding: 0 2px; height: 20px; }
.name-row { display: flex; align-items: center; margin-top: 6px; padding-left: 9px; }
.name-row label { width: 39px; }
.name-row .text { flex: 1; min-width: 0; padding: 0 3px; color: #6d6d6d; background: #f0f0f0; box-shadow: inset 0 0 0 2px #fff; }
.props-btn { display: flex; align-items: center; justify-content: center; width: 25px; height: 24px; margin: 0 1px 0 4px; border: 1px solid #acacac; background: linear-gradient(#f3f3f3, #e5e5e5); }
.second { margin-top: 8px; }
.two { display: grid; grid-template-columns: 188px 1fr; grid-auto-rows: 19px; margin-top: 3px; padding-left: 9px; }
.external p { margin-top: 9px; padding-left: 9px; }
.radios { display: grid; grid-auto-rows: 19px; margin-top: -1px; padding-left: 27px; }
.actions { display: flex; justify-content: flex-end; gap: 10px; margin-top: 15px; padding-right: 1px; }
.push { width: 74px; height: 22px; border: 1px solid #acacac; background: linear-gradient(#f0f0f0, #e5e5e5); }
.push.default { border-color: #3399ff; outline: 1px dotted #000; outline-offset: -4px; }
.fields { display: grid; grid-template-columns: 124px 1fr; row-gap: 3px; align-items: start; }
.fields label { height: 20px; gap: 0; }
.fields label:nth-of-type(2) { height: 14px; }
.fields textarea { height: 32px; resize: none; display: block; width: 100%; }
.dlg-tabs { display: flex; align-items: flex-end; height: 22px; margin-top: 8px; margin-bottom: -1px; z-index: 1; }
.dlg-tabs button { height: 20px; min-width: 70px; padding: 2px 7px 0; margin-left: -1px; border: 1px solid #ababab; background: linear-gradient(#f0f0f0, #e6e6e6); }
.dlg-tabs .on { height: 22px; min-width: 73px; margin: 0; background: #fff; border-bottom-color: #fff; }
.pane { display: flex; flex-direction: column; margin-right: 2px; padding: 16px 6px 15px 8px; border: 1px solid #ababab; background: #fff; }
.pane p { margin-top: 4px; margin-bottom: -1px; padding-left: 9px; white-space: nowrap; }
.opt { height: 19px; margin-left: 9px; }
.every { display: flex; align-items: center; height: 23px; }
.every label { width: 135px; }
.every > .dim { margin-left: 9px; }
.dim { color: #6d6d6d; }
.nested { height: 26px; margin: 3px 0 3px 27px; align-items: flex-start; line-height: 13px; }
.multi { height: 26px; align-items: flex-start; line-height: 13px; margin-top: 6px; }
.olap { margin-top: 6px; }
.formats { display: grid; grid-template-columns: 124px 1fr; grid-auto-rows: 19px; padding-left: 9px; }
.extract { margin-top: 6px; }
.max { display: flex; align-items: center; gap: 5px; margin-top: 5px; padding-left: 9px; }
.lang { margin-top: 7px; }
.spin { display: flex; box-sizing: border-box; width: 53px; height: 20px; border: 1px solid #ababab; background: #fff; padding: 1px; }
.spin.wide { width: 71px; }
.spin input { flex: 1; min-width: 0; border: 0; padding: 0 2px; background: #f0f0f0; color: #6d6d6d; }
.steps { display: flex; flex-direction: column; width: 15px; }
.steps button { display: flex; flex: 1; align-items: center; justify-content: center; color: #000; border: 1px solid #b5b5b5; background: #f0f0f0; }
.steps button:disabled { color: #6d6d6d; border-color: #dedede; }
.query .actions { margin-top: 9px; }
.grip { position: absolute; right: 6px; bottom: 6px; }

.arrows { position: absolute; inset: 0; width: 100%; height: 100%; pointer-events: none; }
</style>
